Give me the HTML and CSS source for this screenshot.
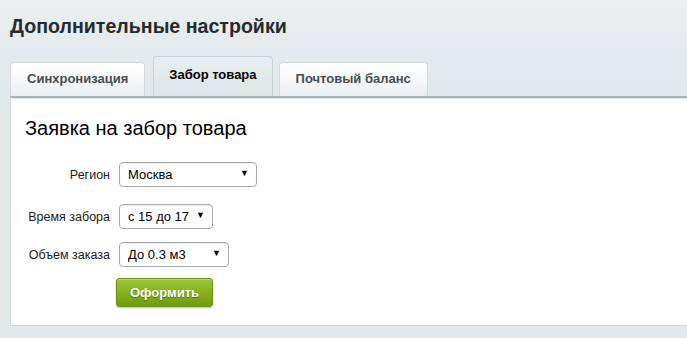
FILE: index.html
```html
<!DOCTYPE html>
<html lang="ru">
<head>
    <meta charset="UTF-8">
    <title>Дополнительные настройки</title>
    <link rel="stylesheet" href="styles.css">
</head>
<body>
    <div class="page">
        <h1 class="title">Дополнительные настройки</h1>

        <div class="tabs">
            <span class="tab">Синхронизация</span>
            <span class="tab active">Забор товара</span>
            <span class="tab">Почтовый баланс</span>
        </div>

        <div class="panel">
            <h2 class="panel-title">Заявка на забор товара</h2>

            <div class="form">
                <label class="label" for="region">Регион</label>
                <div class="select-box w-region">
                    <select id="region">
                        <option>Москва</option>
                    </select>
                </div>

                <label class="label row-2" for="time">Время забора</label>
                <div class="select-box w-time row-2">
                    <select id="time">
                        <option>с 15 до 17</option>
                    </select>
                </div>

                <label class="label row-3" for="volume">Объем заказа</label>
                <div class="select-box w-volume row-3">
                    <select id="volume">
                        <option>До 0.3 м3</option>
                    </select>
                </div>

                <div></div>
                <div class="actions">
                    <button class="btn">Оформить</button>
                </div>
            </div>
        </div>
    </div>
</body>
</html>
```

FILE: styles.css
```css
* {
    box-sizing: border-box;
}

body {
    margin: 0;
    background-color: #e2e9eb;
    font-family: Arial, "Liberation Sans", sans-serif;
    color: #000;
}

.page {
    padding: 14px 0 0 10px;
    height: 338px;
    background: linear-gradient(to bottom, #eaeff0 0, #e2e9eb 80px);
}

.title {
    margin: 0 0 18px 0;
    font-size: 19.6px;
    line-height: 24px;
    font-weight: bold;
    color: #262b2e;
}

/* tabs */
.tabs {
    display: flex;
    align-items: flex-end;
    gap: 8px;
    height: 40px;
}

.tab {
    height: 34px;
    line-height: 32px;
    padding: 0 16px;
    font-size: 13px;
    font-weight: bold;
    color: #474c50;
    white-space: nowrap;
    background: linear-gradient(to bottom, #ffffff 0, #f4f6f7 60%, #e9eef0 100%);
    border: 1px solid #d2d9dc;
    border-bottom: none;
    border-radius: 4px 4px 0 0;
}

.tab.active {
    height: 40px;
    line-height: 36px;
    padding: 0 15px;
    margin-right: -2px;
    color: #000;
    background: linear-gradient(to bottom, #e9eef0 0, #dfe6e8 100%);
    border-color: #c9d1d4;
}

/* panel */
.panel {
    height: 230px;
    background-color: #fff;
    border-top: 2px solid #a9b1b4;
    border-left: 1px solid #d3dadd;
    border-bottom: 1px solid #cfd6d8;
    box-shadow: inset 0 1px 0 #dfe4e6;
    padding: 18px 0 0 14px;
}

.panel-title {
    margin: 0 0 22px 0;
    font-size: 20px;
    line-height: 24px;
    font-weight: normal;
    color: #000;
}

.form {
    display: grid;
    grid-template-columns: 85px auto;
    column-gap: 9px;
    justify-content: start;
    align-items: center;
}

.label {
    justify-self: end;
    font-size: 12.5px;
    white-space: nowrap;
    color: #1a1a1a;
}

.row-2 {
    margin-top: 17px;
}

.row-3 {
    margin-top: 13px;
}

.select-box {
    position: relative;
    height: 25px;
    border: 1px solid #a5a9ab;
    border-radius: 4px;
    background-color: #fff;
    box-shadow: inset 0 1px 1px rgba(0, 0, 0, 0.08);
}

.select-box::after {
    content: "▼";
    position: absolute;
    right: 7px;
    top: 5px;
    font-size: 9px;
    color: #000;
    pointer-events: none;
}

.select-box select {
    appearance: none;
    -webkit-appearance: none;
    width: 100%;
    height: 100%;
    border: none;
    background: transparent;
    padding: 0 0 0 8px;
    font-family: Arial, "Liberation Sans", sans-serif;
    font-size: 13px;
    color: #000;
    outline: none;
}

.w-region {
    width: 138px;
}

.w-time {
    width: 94px;
}

.w-volume {
    width: 110px;
}

.actions {
    margin-top: 11px;
    margin-left: -3px;
}

.btn {
    width: 97px;
    height: 29px;
    border: 1px solid #6a8f12;
    border-radius: 3px;
    background: linear-gradient(to bottom, #9cc63a 0, #86b21e 50%, #6f9b0c 100%);
    box-shadow: 0 1px 2px rgba(0, 0, 0, 0.25), inset 0 1px 0 rgba(255, 255, 255, 0.3);
    color: #fff;
    font-family: Arial, "Liberation Sans", sans-serif;
    font-size: 13px;
    font-weight: bold;
    text-shadow: 0 1px 1px rgba(0, 0, 0, 0.35);
    cursor: pointer;
}
```
